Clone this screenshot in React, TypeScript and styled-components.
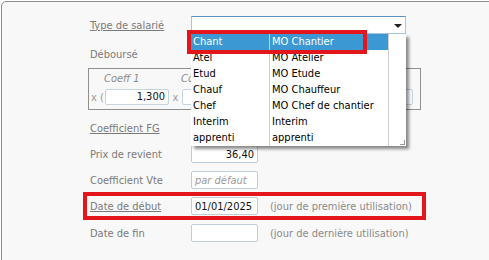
import styled, { createGlobalStyle } from "styled-components";

const GlobalStyle = createGlobalStyle`
  html, body {
    margin: 0;
    padding: 0;
    background: #ffffff;
    overflow: hidden;
  }
  body {
    font-family: "DejaVu Sans Condensed", "DejaVu Sans", sans-serif;
    font-stretch: condensed;
    font-size: 11px;
  }
`

const Panel = styled.div`
  margin: 1px 0 0 1px;
  width: 560px;
  height: 300px;
  border: 1px solid #8d8d8d;
  border-top-left-radius: 5px;
  background: #f8f8f8;
  padding: 14px 0 0 88px;
  box-sizing: border-box;
`

interface RowProps {
  $top?: number;
  $marked?: boolean;
}

const Row = styled.div<RowProps>`
  position: relative;
  display: flex;
  align-items: center;
  height: 18px;
  margin-top: ${({ $top }) => ($top === undefined ? 8 : $top)}px;

  &::after {
    content: "";
    display: ${({ $marked }) => ($marked ? "block" : "none")};
    position: absolute;
    left: -7px;
    top: -5px;
    width: 343px;
    height: 28px;
    border: 4px solid #e3161b;
    box-sizing: border-box;
  }
`

const Label = styled.span<{ $link?: boolean }>`
  width: 101px;
  flex: none;
  color: #7a7a7a;
  text-decoration: ${({ $link }) => ($link ? "underline" : "none")};
  white-space: nowrap;
`

const Field = styled.div<{ $align?: string; $italic?: boolean; $placeholder?: boolean }>`
  width: 67px;
  height: 18px;
  flex: none;
  box-sizing: border-box;
  border: 1px solid #bfcedb;
  border-radius: 2px;
  background: #ffffff;
  padding: 0 3px;
  display: flex;
  align-items: center;
  justify-content: ${({ $align }) => $align || "flex-start"};
  font-style: ${({ $italic }) => ($italic ? "italic" : "normal")};
  color: ${({ $placeholder }) => ($placeholder ? "#9a9a9a" : "#111111")};
  white-space: nowrap;
`

const Hint = styled.span`
  margin-left: 12px;
  color: #8a8a8a;
  white-space: nowrap;
`

const SelectWrap = styled.div`
  position: relative;
  width: 215px;
  height: 18px;
`

const SelectBox = styled.div`
  height: 18px;
  box-sizing: border-box;
  border: 1px solid #a9c5dc;
  border-top-color: #5a93c4;
  background: #ffffff;
  position: relative;
`

const Arrow = styled.span`
  position: absolute;
  right: 3px;
  top: 7px;
  width: 0;
  height: 0;
  border-left: 4px solid transparent;
  border-right: 4px solid transparent;
  border-top: 4px solid #222222;
`

const ListBox = styled.div`
  position: absolute;
  left: 0;
  top: 18px;
  width: 215px;
  background: #ffffff;
  box-shadow: 3px 3px 3px rgba(0, 0, 0, 0.45);
  z-index: 5;
`

const Option = styled.div<{ $selected?: boolean }>`
  display: grid;
  grid-template-columns: 79px 119px 17px;
  height: 16px;
  line-height: 16px;
  color: ${({ $selected }) => ($selected ? "#ffffff" : "#000000")};
  background: ${({ $selected }) =>
    $selected
      ? "linear-gradient(to right, #3b98d3 0, #3b98d3 198px, #ffffff 198px)"
      : "#ffffff"};
`

const Cell = styled.span`
  padding-left: 2px;
  border-right: 1px solid #cfcfcf;
  white-space: nowrap;
  overflow: hidden;
  &:last-child {
    border-right: none;
  }
`

const Grip = styled.span`
  position: absolute;
  right: 1px;
  bottom: 1px;
  width: 4px;
  height: 4px;
  border-right: 1px solid #9a9a9a;
  border-bottom: 1px solid #9a9a9a;
`

const Marker = styled.div`
  position: absolute;
  left: -4px;
  top: 14px;
  width: 180px;
  height: 24px;
  border: 4px solid #e3161b;
  box-sizing: border-box;
  z-index: 6;
`

const CoeffBox = styled.div`
  margin: 5px 0 0 -2px;
  width: 333px;
  height: 42px;
  box-sizing: border-box;
  border: 1px solid #8f8f8f;
  padding: 1px 0 0 1px;
`

const CoeffHead = styled.div`
  display: flex;
  height: 17px;
  align-items: center;
`

const CoeffTitle = styled.span<{ $first?: boolean }>`
  width: 77px;
  padding-left: ${({ $first }) => ($first ? "14px" : "0")};
  font-style: italic;
  color: #8a8a8a;
  white-space: nowrap;
`

const CoeffLine = styled.div`
  display: flex;
  align-items: center;
  height: 16px;
  margin-top: 2px;
  color: #9a9a9a;
`

const Sign = styled.span<{ $wide?: boolean }>`
  width: ${({ $wide }) => ($wide ? "15px" : "13px")};
  text-align: center;
  flex: none;
  white-space: nowrap;
`

const CoeffInput = styled.div<{ $grow?: boolean }>`
  width: 64px;
  flex: ${({ $grow }) => ($grow ? "1" : "none")};
  margin-right: ${({ $grow }) => ($grow ? "7px" : "0")};
  height: 16px;
  box-sizing: border-box;
  border: 1px solid #c6d4e0;
  border-radius: 2px;
  background: #ffffff;
  color: #111111;
  text-align: right;
  padding-right: 3px;
  line-height: 14px;
`

const options = [
  ["Chant", "MO Chantier"],
  ["Atel", "MO Atelier"],
  ["Etud", "MO Etude"],
  ["Chauf", "MO Chauffeur"],
  ["Chef", "MO Chef de chantier"],
  ["Interim", "Interim"],
  ["apprenti", "apprenti"],
];

export default function App() {
  return (
    <>
      <GlobalStyle />
      <Panel>
        <Row $top={0}>
          <Label $link>Type de salarié</Label>
          <SelectWrap>
            <SelectBox>
              <Arrow />
            </SelectBox>
            <ListBox>
              {options.map(([code, name], i) => (
                <Option key={code} $selected={i === 0}>
                  <Cell>{code}</Cell>
                  <Cell>{name}</Cell>
                  <Cell />
                </Option>
              ))}
              <Grip />
            </ListBox>
            <Marker />
          </SelectWrap>
        </Row>
        <Row $top={11}>
          <Label>Déboursé</Label>
        </Row>
        <CoeffBox>
          <CoeffHead>
            <CoeffTitle $first>Coeff 1</CoeffTitle>
            <CoeffTitle>Coeff 2</CoeffTitle>
          </CoeffHead>
          <CoeffLine>
            <Sign $wide>x (</Sign>
            <CoeffInput>1,300</CoeffInput>
            <Sign>x</Sign>
            <CoeffInput />
            <CoeffInput $grow />
          </CoeffLine>
        </CoeffBox>
        <Row $top={9}>
          <Label $link>Coefficient FG</Label>
        </Row>
        <Row>
          <Label>Prix de revient</Label>
          <Field $align="flex-end">36,40</Field>
        </Row>
        <Row>
          <Label>Coefficient Vte</Label>
          <Field $italic $placeholder>par défaut</Field>
        </Row>
        <Row $marked>
          <Label $link>Date de début</Label>
          <Field>01/01/2025</Field>
          <Hint>(jour de première utilisation)</Hint>
        </Row>
        <Row $top={9}>
          <Label>Date de fin</Label>
          <Field />
          <Hint>(jour de dernière utilisation)</Hint>
        </Row>
      </Panel>
    </>
  );
}
